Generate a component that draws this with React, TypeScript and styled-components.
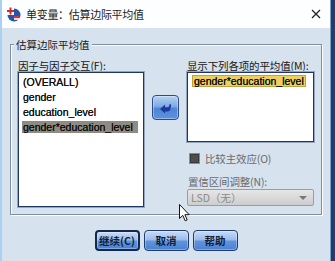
import React from "react";
import styled, { createGlobalStyle } from "styled-components";

const Global = createGlobalStyle`
  html, body { margin: 0; padding: 0; background: #d6e2ee; }
  * { box-sizing: border-box; }
`;

const CJK = `"Noto Sans CJK SC", "Liberation Sans", sans-serif`;
const LATIN = `"Liberation Sans", "Noto Sans CJK SC", sans-serif`;

const Screen = styled.div`
  position: relative;
  display: flex;
  width: 335px;
  height: 261px;
  overflow: hidden;
`;

const Window = styled.div`
  display: flex;
  flex-direction: column;
  width: 330px;
  height: 100%;
  border-left: 2px solid #a9d2f2;
  background: #d6e2ee;
`;

const Desktop = styled.div`
  flex: 1;
  background: linear-gradient(to right, #7e9fc8 0, #7e9fc8 1px, #1d3d70 1px, #213f6f 100%);
`;

const TitleBar = styled.div`
  display: flex;
  align-items: center;
  height: 28px;
  flex-shrink: 0;
  padding: 0 6px 0 4px;
  background: #fdfeff;
`;

const TitleText = styled.span`
  flex: 1;
  margin-left: 5px;
  font-family: ${CJK};
  font-size: 11px;
  color: #1b1b1b;
  letter-spacing: -0.3px;
`;

const Close = styled.div`
  display: flex;
  width: 12px;
  height: 12px;
  margin-right: 2px;
`;

const Body = styled.div`
  flex: 1;
  display: flex;
  flex-direction: column;
  padding: 10px 8px 0 8px;
`;

const Group = styled.fieldset`
  margin: 0;
  padding: 8px 7px 7px 7px;
  border: 1px solid #7d8fa3;
  box-shadow: inset 1px 1px 0 #ffffff, 1px 1px 0 #ffffff;
  min-width: 0;
`;

const Legend = styled.legend`
  margin-left: -4px;
  padding: 0 2px;
  font-family: ${CJK};
  font-size: 10.5px;
  line-height: 13px;
  color: #1b1b1b;
  background: #d6e2ee;
`;

const Columns = styled.div`
  display: grid;
  grid-template-columns: 126px 27px 127px;
  column-gap: 8px;
`;

const Column = styled.div`
  display: flex;
  flex-direction: column;
`;

const Label = styled.div<{ $muted?: boolean }>`
  font-family: ${CJK};
  font-size: 10.5px;
  line-height: 13px;
  height: 13px;
  white-space: nowrap;
  color: ${(p) => (p.$muted ? "#6a6a6a" : "#151515")};
  margin-left: ${(p) => (p.$muted ? "1px" : "0")};
  letter-spacing: -0.15px;
`;

const ListBox = styled.div<{ $h: number }>`
  display: flex;
  flex-direction: column;
  align-items: flex-start;
  gap: 3px;
  height: ${(p) => p.$h}px;
  padding-top: 3px;
  background: #ffffff;
  border: 1px solid #1f3563;
  box-shadow: 0 0 0 1px #93a6bd;
`;

const Item = styled.div<{ $selected?: boolean; $wide?: boolean }>`
  font-family: ${LATIN};
  font-size: 10.5px;
  line-height: 12px;
  height: 12px;
  color: #111111;
  white-space: nowrap;
  padding: 0 1px;
  margin-left: 3px;
  width: ${(p) => (p.$wide ? "116px" : "auto")};
  background: ${(p) => (p.$selected ? "#8d8b82" : "transparent")};
  text-shadow: 0 0 0.3px #111;
`;

const Chosen = styled.div`
  font-family: ${LATIN};
  font-size: 10.5px;
  line-height: 10px;
  height: 12px;
  color: #111111;
  white-space: nowrap;
  margin: -1px 0 0 4px;
  padding: 0 1px;
  background: #eed060;
  border: 1px solid #c2a23c;
  text-shadow: 0 0 0.3px #111;
`;

const MoveButton = styled.div`
  display: flex;
  align-items: center;
  justify-content: center;
  width: 27px;
  height: 25px;
  margin-top: 36px;
  border: 1px solid #2a4c8c;
  border-radius: 4px;
  background: linear-gradient(to bottom, #b7d2f3 0%, #7fa9e6 45%, #4f84d6 55%, #5e92df 100%);
  box-shadow: inset 0 0 0 1px rgba(255, 255, 255, 0.35);
`;

const CheckRow = styled.div`
  display: flex;
  align-items: center;
  gap: 4px;
  margin: 10px 0 0 2px;
  height: 12px;
`;

const CheckBox = styled.div`
  width: 11px;
  height: 11px;
  background: #4d4d4d;
  border: 1px solid #8c8c8c;
  box-shadow: inset 0 0 0 1px #3a3a3a;
`;

const Spacer = styled.div<{ $h: number }>`
  height: ${(p) => p.$h}px;
`;

const Select = styled.div`
  display: flex;
  align-items: center;
  justify-content: space-between;
  height: 17px;
  margin-top: 1px;
  padding: 0 6px 0 3px;
  border: 1px solid #9c9c9c;
  border-radius: 2px;
  background: linear-gradient(to bottom, #e6e6e6, #cdcdcd);
  font-family: ${CJK};
  font-size: 10.5px;
  color: #8a8a8a;
`;

const Caret = styled.div`
  width: 0;
  height: 0;
  border-left: 4px solid transparent;
  border-right: 4px solid transparent;
  border-top: 4px solid #777777;
`;

const ButtonRow = styled.div`
  display: flex;
  justify-content: center;
  gap: 4px;
  margin-top: 15px;
`;

const Button = styled.div<{ $focused?: boolean }>`
  display: flex;
  align-items: center;
  justify-content: center;
  width: 45px;
  height: 21px;
  border: ${(p) => (p.$focused ? "2px solid #14284e" : "1px solid #1f3d73")};
  border-radius: 4px;
  background: linear-gradient(to bottom, #c9dcf5 0%, #9cbdea 45%, #5f93dc 55%, #4a82d2 100%);
  box-shadow: inset 0 0 0 1px rgba(255, 255, 255, 0.3);
  font-family: ${CJK};
  font-size: 10.5px;
  font-weight: 700;
  color: #0f1e3c;
`;

const Cursor = styled.svg`
  position: absolute;
  left: 179px;
  top: 204px;
`;

function AppIcon() {
  return (
    <svg width="15" height="15" viewBox="0 0 15 15">
      <circle cx="8" cy="8" r="6.5" fill="#2455a6" />
      <rect x="1" y="1" width="7" height="7" fill="#ffffff" />
      <rect x="3.5" y="0.5" width="2" height="7" fill="#d42a2a" />
      <rect x="1" y="3" width="7" height="2" fill="#d42a2a" />
      <rect x="8" y="9" width="5" height="2.2" fill="#e03030" />
      <rect x="8" y="11.2" width="5" height="1.6" fill="#ffffff" />
    </svg>
  );
}

export default function App() {
  return (
    <>
      <Global />
      <Screen>
        <Window>
          <TitleBar>
            <AppIcon />
            <TitleText>单变量：估算边际平均值</TitleText>
            <Close>
              <svg width="12" height="12" viewBox="0 0 12 12">
                <path d="M2 2 L10 10 M10 2 L2 10" stroke="#202020" strokeWidth="1.2" />
              </svg>
            </Close>
          </TitleBar>
          <Body>
            <Group>
              <Legend>估算边际平均值</Legend>
              <Columns>
                <Column>
                  <Label>因子与因子交互(F):</Label>
                  <ListBox $h={135}>
                    <Item>(OVERALL)</Item>
                    <Item>gender</Item>
                    <Item>education_level</Item>
                    <Item $selected $wide>
                      gender*education_level
                    </Item>
                  </ListBox>
                </Column>
                <Column>
                  <MoveButton>
                    <svg width="13" height="12" viewBox="0 0 13 12">
                      <path
                        d="M1 7 L6 2.5 L6 5.2 L8.6 5.2 Q10.2 5.2 10.6 2.2 L12 2.2 Q12.2 9.6 8.4 9.4 L6 9.4 L6 11.6 Z"
                        fill="#1c3c9c"
                      />
                    </svg>
                  </MoveButton>
                </Column>
                <Column>
                  <Label>显示下列各项的平均值(M):</Label>
                  <ListBox $h={70}>
                    <Chosen>gender*education_level</Chosen>
                  </ListBox>
                  <CheckRow>
                    <CheckBox />
                    <Label $muted>比较主效应(O)</Label>
                  </CheckRow>
                  <Spacer $h={11} />
                  <Label $muted>置信区间调整(N):</Label>
                  <Select>
                    <span>LSD（无）</span>
                    <Caret />
                  </Select>
                </Column>
              </Columns>
            </Group>
            <ButtonRow>
              <Button $focused>继续(C)</Button>
              <Button>取消</Button>
              <Button>帮助</Button>
            </ButtonRow>
          </Body>
        </Window>
        <Desktop />
        <Cursor width="11" height="18" viewBox="0 0 11 18">
          <path
            d="M0.5 0.5 L0.5 14.5 L3.8 11.4 L6.2 16.8 L8.2 15.9 L5.9 10.7 L10.2 10.7 Z"
            fill="#ffffff"
            stroke="#111111"
            strokeWidth="1"
          />
        </Cursor>
      </Screen>
    </>
  );
}
